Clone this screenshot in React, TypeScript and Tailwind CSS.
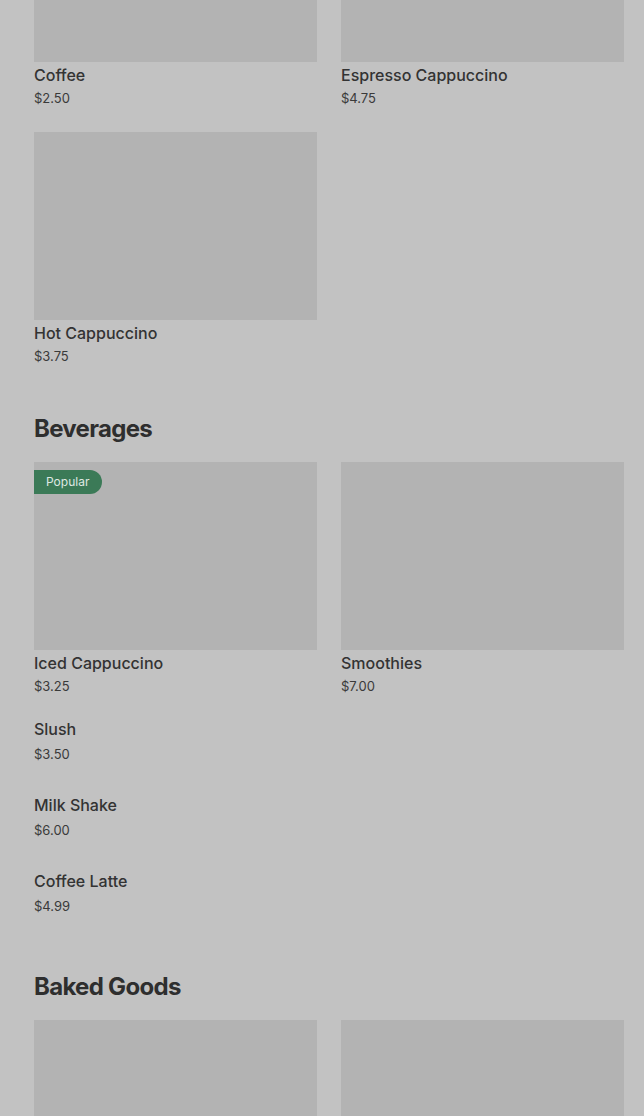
const font = { fontFamily: 'Inter, "Noto Sans", sans-serif' };

type Item = { name: string; price: string; popular?: boolean };

function Card({ item }: { item: Item }) {
  return (
    <div className="flex flex-col">
      <div className="relative h-[188px] bg-[#b3b3b3]">
        {item.popular && (
          <span className="absolute left-0 top-[8px] h-[24px] w-[68px] flex items-center pl-[12px] rounded-r-full bg-[#3b7a57] text-[12px] text-[#dfe8e2]">
            Popular
          </span>
        )}
      </div>
      <div className="mt-[2px] text-[16px] leading-[22px] font-medium text-[#333]">{item.name}</div>
      <div className="mt-[2px] text-[13px] leading-[20px] text-[#3a3a3a]">{item.price}</div>
    </div>
  );
}

function ListItem({ item }: { item: Item }) {
  return (
    <div className="pb-[30px]">
      <div className="text-[16px] leading-[22px] font-medium text-[#333]">{item.name}</div>
      <div className="mt-[4px] text-[13px] leading-[20px] text-[#3a3a3a]">{item.price}</div>
    </div>
  );
}

export default function App() {
  return (
    <div className="w-[644px] h-[1116px] overflow-hidden bg-[#c2c2c2] pl-[34px] pr-[20px]" style={font}>
      <div className="-mt-[126px] grid grid-cols-2 gap-x-[24px] gap-y-[24px]">
        <Card item={{ name: 'Coffee', price: '$2.50' }} />
        <Card item={{ name: 'Espresso Cappuccino', price: '$4.75' }} />
        <Card item={{ name: 'Hot Cappuccino', price: '$3.75' }} />
      </div>

      <h2 className="mt-[47px] text-[24px] leading-[32px] font-bold tracking-[-0.7px] text-[#2e2e2e]">Beverages</h2>
      <div className="mt-[17px] grid grid-cols-2 gap-x-[24px]">
        <Card item={{ name: 'Iced Cappuccino', price: '$3.25', popular: true }} />
        <Card item={{ name: 'Smoothies', price: '$7.00' }} />
      </div>
      <div className="mt-[22px]">
        <ListItem item={{ name: 'Slush', price: '$3.50' }} />
        <ListItem item={{ name: 'Milk Shake', price: '$6.00' }} />
        <ListItem item={{ name: 'Coffee Latte', price: '$4.99' }} />
      </div>

      <h2 className="mt-[25px] text-[24px] leading-[32px] font-bold tracking-[-0.7px] text-[#2e2e2e]">Baked Goods</h2>
      <div className="mt-[17px] grid grid-cols-2 gap-x-[24px]">
        <div className="h-[188px] bg-[#b3b3b3]" />
        <div className="h-[188px] bg-[#b3b3b3]" />
      </div>
    </div>
  );
}
